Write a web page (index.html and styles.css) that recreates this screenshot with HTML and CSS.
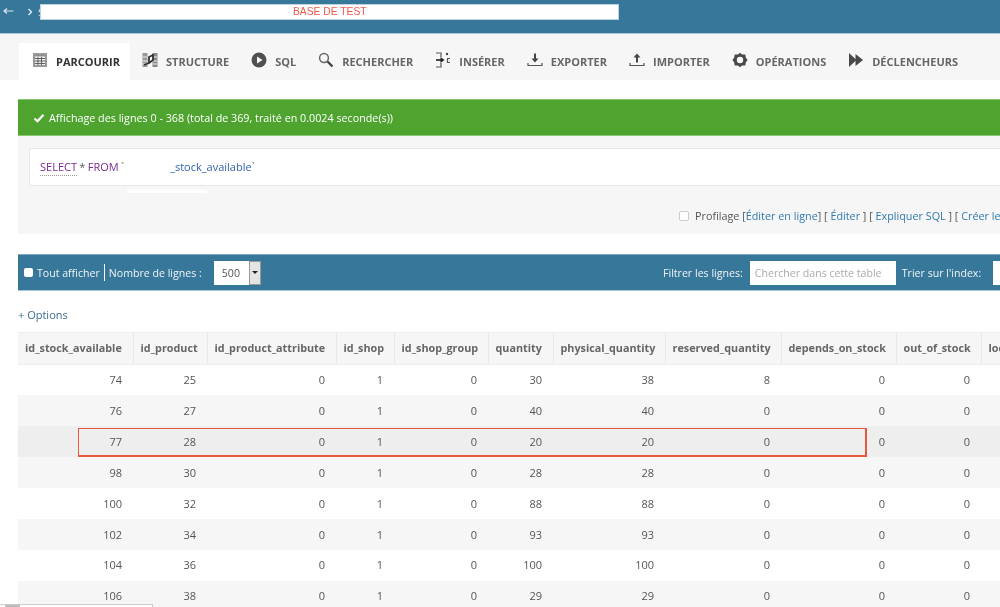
FILE: index.html
```html
<!DOCTYPE html>
<html lang="fr">
<head>
<meta charset="utf-8">
<title>Base de test</title>
<link rel="stylesheet" href="styles.css">
</head>
<body>
<header class="topbar">
  <svg class="nav-back" viewBox="0 0 11 8" width="11" height="8"><path d="M10.500 4H1.500M4 1.500 1 4l3 2.500" fill="none" stroke="#dce8ef" stroke-width="1.200"/></svg>
  <svg class="nav-next" viewBox="0 0 6 8" width="6" height="8"><path d="M1.500 1 4.500 4 1.500 7" fill="none" stroke="#dce8ef" stroke-width="1.400"/></svg>
  <span class="crumb">$</span>
  <div class="crumb-mask">BASE DE TEST</div>
</header>
<nav class="tabs">
  <a class="tab active">
    <svg class="ico" viewBox="0 0 16 16"><rect x="1" y="1" width="14" height="14" fill="#999"/><rect x="3" y="3" width="10" height="10" fill="#eee"/><path d="M3 3.800h10M3 6.500h10M3 9h10M3 11.500h10M6 5v8M9.500 5v8" stroke="#555" stroke-width=".9"/></svg>PARCOURIR</a>
  <a class="tab">
    <svg class="ico" viewBox="0 0 16 16"><rect x="0.500" y="1" width="5" height="14" fill="#999"/><rect x="10.500" y="1" width="5" height="14" fill="#888"/><path d="M1 5h4M1 9h4M1 12h4M11 5h4M11 9h4M11 12h4" stroke="#eee"/><path d="M2 13 7 11V5l4-2" fill="none" stroke="#333" stroke-width="1.800"/><path d="M7 11 11 8V2" fill="none" stroke="#333" stroke-width="1.800"/></svg>STRUCTURE</a>
  <a class="tab">
    <svg class="ico" viewBox="0 0 16 16"><circle cx="8" cy="8" r="7.500" fill="#505050"/><path d="M6 4.500v7L11.500 8z" fill="#f6f6f6"/></svg>SQL</a>
  <a class="tab">
    <svg class="ico" viewBox="0 0 16 16"><circle cx="6" cy="6" r="4.400" fill="none" stroke="#666" stroke-width="1.500"/><path d="M9.500 9.500 14.500 14.500" stroke="#444" stroke-width="2.400"/></svg>RECHERCHER</a>
  <a class="tab">
    <svg class="ico" viewBox="0 0 16 16"><path d="M1 1h5v4M6 11v4H1" fill="none" stroke="#555" stroke-width="1.200"/><path d="M1 8h6" stroke="#444" stroke-width="2"/><path d="M5.500 5 9.500 8l-4 3z" fill="#222"/><circle cx="12" cy="2" r="1.200" fill="#444"/><path d="M15 6.500h-2.500v4H15" fill="none" stroke="#555" stroke-width="1.200"/></svg>INSÉRER</a>
  <a class="tab">
    <svg class="ico" viewBox="0 0 16 16"><path d="M8 1.500v6" stroke="#444" stroke-width="2"/><path d="M4.500 6.500h7L8 10.500z" fill="#444"/><path d="M1 11v2.500h14V11" fill="none" stroke="#555" stroke-width="1.200"/></svg>EXPORTER</a>
  <a class="tab">
    <svg class="ico" viewBox="0 0 16 16"><path d="M8 10.500v-6" stroke="#444" stroke-width="2"/><path d="M4.500 5.500h7L8 1.500z" fill="#444"/><path d="M1 11v2.500h14V11" fill="none" stroke="#555" stroke-width="1.200"/></svg>IMPORTER</a>
  <a class="tab">
    <svg class="ico" viewBox="0 0 16 16"><path d="M8 .8 10 2.600 13.300 2.500 13.800 5.500 15.500 8 13.800 10.500 13.300 13.500 10 13.400 8 15.200 6 13.400 2.700 13.500 2.200 10.500.5 8 2.200 5.500 2.700 2.500 6 2.600z" fill="#484848"/><circle cx="8" cy="8" r="3.200" fill="#f6f6f6"/></svg>OPÉRATIONS</a>
  <a class="tab">
    <svg class="ico" viewBox="0 0 16 16"><path d="M1 1v14L8.500 8z" fill="#484848"/><path d="M7.500 2v12L15 8z" fill="#484848"/></svg>DÉCLENCHEURS</a>
</nav>
<main class="content">
  <div class="success"><svg class="check" viewBox="0 0 12 10" width="12" height="10"><path d="M1.500 5.500 4.500 8.300 10.500 1.800" fill="none" stroke="#fff" stroke-width="2.200"/></svg>Affichage des lignes 0 - 368 (total de 369, traité en 0.0024 seconde(s))</div>
  <section class="query">
    <div class="code"><span class="kw kw-doc">SELECT</span> <span class="star">*</span> <span class="kw">FROM</span> <span class="tick">`</span><span class="tbl-name">_stock_available</span><span class="tick">`</span></div>
    <div class="smudge"></div>
    <div class="links"><span class="box"></span><span class="prof">Profilage [<a>Éditer en ligne</a>] [ <a>Éditer</a> ] [ <a>Expliquer SQL</a> ] [ <a>Créer le code PHP</a> ]</span></div>
  </section>
  <section class="toolbar">
    <div class="tool-left">
      <span class="tick-box"></span><span>Tout afficher</span><span class="sep"></span><span>Nombre de lignes :</span>
      <div class="select"><span class="select-val">500</span><span class="select-btn"></span></div>
    </div>
    <div class="tool-right">
      <span>Filtrer les lignes:</span><div class="search">Chercher dans cette table</div><span class="sort">Trier sur l'index:</span><div class="sort-input"></div>
    </div>
  </section>
  <a class="options">+ Options</a>
  <div class="grid-wrap">
    <table class="grid">
      <colgroup><col class="c1"><col class="c2"><col class="c3"><col class="c4"><col class="c5"><col class="c6"><col class="c7"><col class="c8"><col class="c9"><col class="c10"><col class="c11"></colgroup>
      <thead><tr><th>id_stock_available</th><th>id_product</th><th>id_product_attribute</th><th>id_shop</th><th>id_shop_group</th><th>quantity</th><th>physical_quantity</th><th>reserved_quantity</th><th>depends_on_stock</th><th>out_of_stock</th><th class="last">location</th></tr></thead>
      <tbody>
        <tr><td>74</td><td>25</td><td>0</td><td>1</td><td>0</td><td>30</td><td>38</td><td>8</td><td>0</td><td>0</td><td></td></tr>
        <tr class="alt"><td>76</td><td>27</td><td>0</td><td>1</td><td>0</td><td>40</td><td>40</td><td>0</td><td>0</td><td>0</td><td></td></tr>
        <tr class="hover"><td>77</td><td>28</td><td>0</td><td>1</td><td>0</td><td>20</td><td>20</td><td>0</td><td>0</td><td>0</td><td></td></tr>
        <tr class="alt"><td>98</td><td>30</td><td>0</td><td>1</td><td>0</td><td>28</td><td>28</td><td>0</td><td>0</td><td>0</td><td></td></tr>
        <tr><td>100</td><td>32</td><td>0</td><td>1</td><td>0</td><td>88</td><td>88</td><td>0</td><td>0</td><td>0</td><td></td></tr>
        <tr class="alt"><td>102</td><td>34</td><td>0</td><td>1</td><td>0</td><td>93</td><td>93</td><td>0</td><td>0</td><td>0</td><td></td></tr>
        <tr><td>104</td><td>36</td><td>0</td><td>1</td><td>0</td><td>100</td><td>100</td><td>0</td><td>0</td><td>0</td><td></td></tr>
        <tr class="alt"><td>106</td><td>38</td><td>0</td><td>1</td><td>0</td><td>29</td><td>29</td><td>0</td><td>0</td><td>0</td><td></td></tr>
      </tbody>
    </table>
    <div class="mark"></div>
  </div>
</main>
<div class="hscroll"><span class="hthumb"></span></div>
</body>
</html>
```

FILE: styles.css
```css
* { box-sizing: border-box; }
html, body { margin: 0; padding: 0; width: 1000px; height: 607px; overflow: hidden; background: #fff; }
body { position: relative; font-family: "Open Sans", "Noto Sans", sans-serif; font-size: 10.800px; color: #555; filter: blur(0.35px); }

.topbar { height: 34px; background: #37779a; border-bottom: 1px solid #a9c6d6; display: flex; align-items: flex-start; position: relative; }
.nav-back { margin: 7px 0 0 3px; flex: none; }
.nav-next { margin: 8px 0 0 13px; flex: none; }
.crumb { color: #dce8ef; font-size: 11px; line-height: 14px; margin: 5px 0 0 5px; width: 3px; overflow: hidden; }
.crumb-mask { width: 577px; height: 14px; margin-top: 5px; background: #fff; color: #f0584f; font-family: "Liberation Sans", sans-serif; font-size: 10.300px; line-height: 14px; padding-left: 252px; outline: 1px solid #bcd3e0; }

.tabs { height: 46px; background: #f6f6f6; padding: 9px 0 0 19px; display: flex; }
.tab { display: flex; align-items: center; height: 37px; padding: 0 10px 0 12px; font-weight: 700; font-size: 11px; color: #666; white-space: nowrap; }
.tab.active { background: #fff; color: #333; padding-left: 13px; }
.ico { width: 16px; height: 16px; margin-right: 8px; margin-top: -4px; flex: none; }

.content { margin: 19px 0 0 18px; width: 982px; }
.success { height: 37px; background: #4fa42f; border-top: 1px solid #8ac774; border-bottom: 1px solid #8ac774; color: #fff; font-size: 10.750px; display: flex; align-items: center; padding-left: 15px; white-space: nowrap; }
.check { margin-right: 4px; margin-top: 1px; }

.query { height: 98px; background: #f6f6f6; padding: 12px 0 0 11px; position: relative; }
.code { height: 38px; background: #fff; border: 1px solid #e6e6e6; border-right: 0; border-radius: 2px 0 0 2px; padding-left: 10px; line-height: 36px; font-size: 11px; white-space: nowrap; word-spacing: -0.500px; }
.kw { color: #7a2a90; }
.kw-doc { border-bottom: 1px dotted #999; padding-bottom: 1px; }
.star { color: #555; }
.tick { color: #777; }
.tbl-name { color: #2f62b5; margin-left: 46px; }
.smudge { position: absolute; left: 109px; top: 54px; width: 80px; height: 3px; background: #fff; }
.links { display: flex; align-items: center; padding-left: 650px; margin-top: 22px; white-space: nowrap; }
.box { width: 10px; height: 10px; border: 1px solid #ccc; border-radius: 2px; background: #fff; flex: none; margin-right: 6px; }
.links a { color: #2f7ab0; }

.toolbar { height: 37px; margin-top: 20px; background: #37779a; border-top: 1px solid #7fa9c0; border-bottom: 1px solid #a9c6d6; color: #eef4f7; display: flex; align-items: center; white-space: nowrap; font-size: 10.600px; }
.tool-left { display: flex; align-items: center; width: 645px; padding-left: 6px; flex: none; }
.tick-box { width: 9px; height: 9px; background: #fff; border-radius: 2px; margin-right: 4px; }
.sep { width: 1px; height: 17px; background: #fff; margin: 0 4px; }
.select { display: flex; height: 24px; margin-left: 12px; }
.select-val { width: 35px; background: #fff; color: #555; line-height: 24px; padding-left: 8px; }
.select-btn { width: 12px; background: #e4e4e4; border: 1px solid #999; position: relative; }
.select-btn::after { content: ""; position: absolute; left: 2px; top: 9px; border: 3px solid transparent; border-top: 3px solid #222; }
.tool-right { display: flex; align-items: center; flex: none; }
.search { width: 146px; height: 24px; background: #fff; color: #aaa; line-height: 24px; padding-left: 5px; margin-left: 7px; }
.sort { margin-left: 6px; }
.sort-input { width: 60px; height: 24px; background: #fff; margin-left: 12px; }

.options { display: block; height: 41px; padding-top: 16px; line-height: 16px; color: #3b6f95; font-size: 11px; }

.grid-wrap { position: relative; overflow: hidden; }
.grid { border-collapse: collapse; table-layout: fixed; width: 1040px; }
.c1 { width: 115px; } .c2 { width: 74px; } .c3 { width: 129px; } .c4 { width: 58px; } .c5 { width: 94px; } .c6 { width: 65px; } .c7 { width: 112px; } .c8 { width: 116px; } .c9 { width: 115px; } .c10 { width: 85px; } .c11 { width: 77px; }
th { height: 32px; background: #f6f6f6; color: #666; font-size: 10.800px; font-weight: 700; text-align: left; padding: 0 11px 3px 7px; white-space: nowrap; border-top: 1px solid #eee; border-bottom: 1px solid #eee; border-right: 1px solid #e9e9e9; }
th.last { border-right: 0; }
td { height: 30.930px; text-align: right; padding: 0 11px 1px 0; color: #555; font-size: 11px; }
.alt td { background: #f6f6f6; }
.hover td { background: #eee; }
.mark { position: absolute; left: 60px; top: 96px; width: 789px; height: 29px; border: 2px solid #e8573f; border-width: 1.500px 2px 2px 1.500px; }

.hscroll { position: absolute; left: 0; bottom: 0; width: 153px; height: 3px; background: #fff; border-top: 1px solid #ccc; border-right: 1px solid #ccc; }
.hthumb { display: block; width: 15px; height: 2px; margin-left: 5px; background: #bbb; }
```
